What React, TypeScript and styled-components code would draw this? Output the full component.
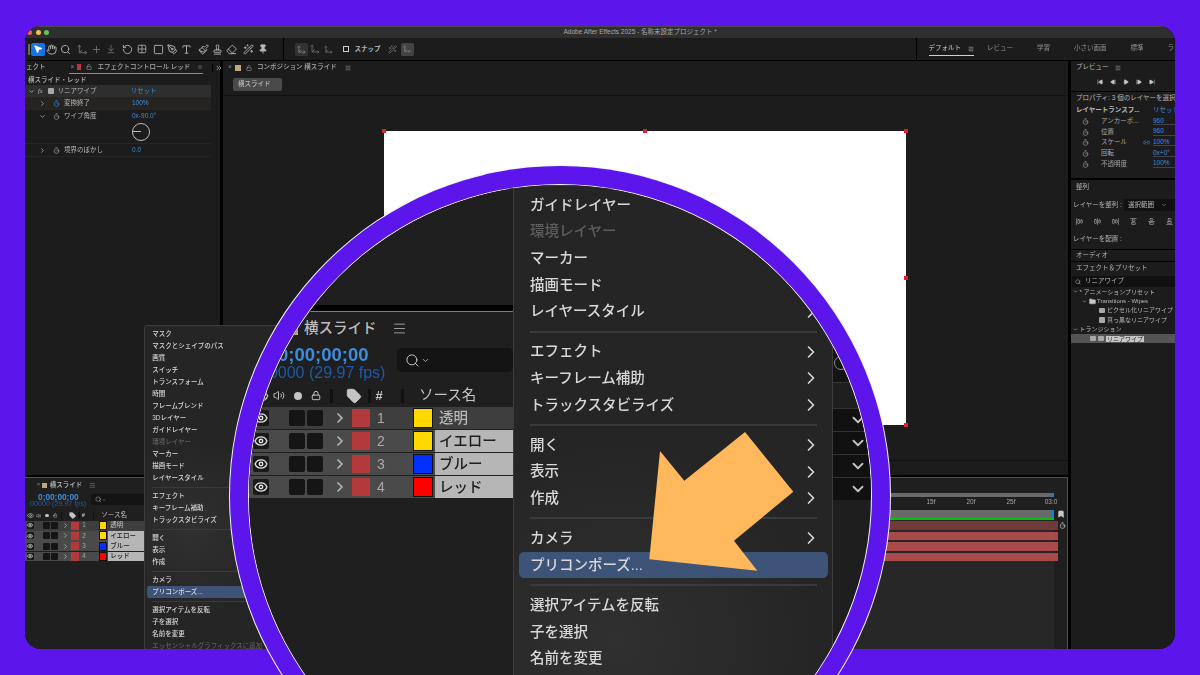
import React from 'react'
import styled, { createGlobalStyle } from 'styled-components'
import {
  AlignHorizontalJustifyCenter,
  AlignHorizontalJustifyEnd,
  AlignHorizontalJustifyStart,
  AlignVerticalJustifyCenter,
  AlignVerticalJustifyEnd,
  AlignVerticalJustifyStart,
  ArrowDownToLine,
  Bookmark,
  ChevronDown,
  ChevronRight,
  ChevronsRight,
  Eraser,
  Eye,
  Folder,
  Grid2x2,
  Hand,
  Link2,
  Lock,
  LockOpen,
  Menu as MenuIcon,
  MousePointer2,
  Move3d,
  Paintbrush,
  PenTool,
  Pin,
  Plus,
  RotateCcw,
  Search,
  SkipBack,
  SkipForward,
  Square,
  Stamp,
  StepBack,
  StepForward,
  Play,
  Tag,
  Timer,
  Type,
  Volume2,
  Wand2,
} from 'lucide-react'

const PURPLE = '#5c16ec'
const FONT = '"Liberation Sans", "Noto Sans CJK JP", sans-serif'
const SMALL = 0.449

const GlobalStyle = createGlobalStyle`
  html, body {
    margin: 0;
    padding: 0;
    background: ${PURPLE};
    overflow: hidden;
  }
  * {
    box-sizing: border-box;
  }
`

type MenuEntry = { label: string; sub?: boolean; off?: boolean; on?: boolean } | 'line'

const tailEntries: MenuEntry[] = [
  { label: 'ガイドレイヤー' },
  { label: '環境レイヤー', off: true },
  { label: 'マーカー' },
  { label: '描画モード', sub: true },
  { label: 'レイヤースタイル', sub: true },
  'line',
  { label: 'エフェクト', sub: true },
  { label: 'キーフレーム補助', sub: true },
  { label: 'トラックスタビライズ', sub: true },
  'line',
  { label: '開く', sub: true },
  { label: '表示', sub: true },
  { label: '作成', sub: true },
  'line',
  { label: 'カメラ', sub: true },
  { label: 'プリコンポーズ...', on: true },
  'line',
  { label: '選択アイテムを反転' },
  { label: '子を選択' },
  { label: '名前を変更' },
]

const headEntries: MenuEntry[] = [
  { label: 'マスク', sub: true },
  { label: 'マスクとシェイプのパス', sub: true },
  { label: '画質', sub: true },
  { label: 'スイッチ', sub: true },
  { label: 'トランスフォーム', sub: true },
  { label: '時間', sub: true },
  { label: 'フレームブレンド', sub: true },
  { label: '3Dレイヤー' },
]

const layers = [
  { num: 1, name: '透明', color: '#ffd800', picked: false },
  { num: 2, name: 'イエロー', color: '#ffd800', picked: true },
  { num: 3, name: 'ブルー', color: '#0030ff', picked: true },
  { num: 4, name: 'レッド', color: '#ff0000', picked: true },
]

const ContextMenu = ({ entries }: { entries: MenuEntry[] }) => (
  <MenuBox>
    {entries.map((entry, i) =>
      entry === 'line' ? (
        <MenuLine key={i} />
      ) : (
        <MenuItem key={entry.label} $off={entry.off} $on={entry.on}>
          {entry.label}
          {entry.sub && <ChevronRight size={20} strokeWidth={2} />}
        </MenuItem>
      ),
    )}
  </MenuBox>
)

const TimelinePanel = () => (
  <PanelColumn>
    <TimelineTab>
      <CloseMark>×</CloseMark>
      <TanChip />
      <TimelineTitle>横スライド</TimelineTitle>
      <MenuIcon size={15} strokeWidth={1.6} color="#9a9a9a" />
    </TimelineTab>
    <TimeRow>
      <TimeBlock>
        <TimeCode>0;00;00;00</TimeCode>
        <FrameCode>00000 (29.97 fps)</FrameCode>
      </TimeBlock>
      <SearchField>
        <Search size={15} strokeWidth={1.6} />
        <ChevronDown size={9} strokeWidth={2} />
      </SearchField>
    </TimeRow>
    <ColumnHeader>
      <HeaderCell $w={24}>
        <Eye size={16} strokeWidth={2} />
      </HeaderCell>
      <HeaderCell $w={12}>
        <Volume2 size={17} strokeWidth={2} />
      </HeaderCell>
      <HeaderCell $w={26}>
        <HeaderDot />
      </HeaderCell>
      <HeaderCell $w={10}>
        <Lock size={15} strokeWidth={2.4} />
      </HeaderCell>
      <HeaderCell $w={20}>
        <HeaderSep />
      </HeaderCell>
      <HeaderCell $w={26}>
        <Tag size={16} fill="#c4c4c4" strokeWidth={1.5} />
      </HeaderCell>
      <HeaderCell $w={4}>
        <HeaderSep />
      </HeaderCell>
      <HeaderCell $w={16}>#</HeaderCell>
      <HeaderCell $w={30}>
        <HeaderSep />
      </HeaderCell>
      <SourceLabel>ソース名</SourceLabel>
    </ColumnHeader>
    {layers.map((layer) => (
      <LayerRow key={layer.num} $first={layer.num === 1}>
        <EyeBox>
          <Eye size={14} strokeWidth={2.4} />
        </EyeBox>
        <SwitchBox />
        <SwitchBox />
        <RowChevron>
          <ChevronRight size={16} strokeWidth={2.6} color="#b5b5b5" />
        </RowChevron>
        <LabelChip />
        <LayerNumber>{layer.num}</LayerNumber>
        <Swatch style={{ background: layer.color }} />
        <LayerName $picked={layer.picked}>{layer.name}</LayerName>
      </LayerRow>
    ))}
  </PanelColumn>
)

const Stopwatch = ({ on }: { on?: boolean }) => (
  <WatchSlot>
    <Timer size={7} strokeWidth={2} color={on ? '#3b8de0' : '#a8a8a8'} />
  </WatchSlot>
)

const propertyRows = [
  { label: 'アンカーポ...', value: '960' },
  { label: '位置', value: '960' },
  { label: 'スケール', value: '100%', link: true },
  { label: '回転', value: '0x+0°' },
  { label: '不透明度', value: '100%' },
]

const App = () => (
  <Page>
    <GlobalStyle />
    <Window>
      <TitleBar>
        <Light $c="#ed5f57" />
        <Light $c="#f4bd4f" />
        <Light $c="#61c454" />
        <WindowTitle>Adobe After Effects 2025 - 名称未設定プロジェクト *</WindowTitle>
      </TitleBar>
      <Toolbar>
        <Grip />
        <ToolGroup>
          <ToolSlot $active>
            <MousePointer2 size={10} fill="#fff" color="#fff" />
          </ToolSlot>
          <ToolSlot><Hand size={11} /></ToolSlot>
          <ToolSlot><Search size={11} /></ToolSlot>
        </ToolGroup>
        <ToolGroup $dim>
          <ToolSlot><Move3d size={11} /></ToolSlot>
          <ToolSlot><Plus size={11} /></ToolSlot>
          <ToolSlot><ArrowDownToLine size={10} /></ToolSlot>
        </ToolGroup>
        <ToolGroup>
          <ToolSlot><RotateCcw size={11} /></ToolSlot>
          <ToolSlot><Grid2x2 size={10} strokeDasharray="2 2" /></ToolSlot>
        </ToolGroup>
        <ToolGroup>
          <ToolSlot><Square size={11} /></ToolSlot>
          <ToolSlot><PenTool size={11} /></ToolSlot>
          <ToolSlot><Type size={11} /></ToolSlot>
        </ToolGroup>
        <ToolGroup>
          <ToolSlot><Paintbrush size={11} /></ToolSlot>
          <ToolSlot><Stamp size={11} /></ToolSlot>
          <ToolSlot><Eraser size={11} /></ToolSlot>
        </ToolGroup>
        <ToolGroup>
          <ToolSlot><Wand2 size={11} /></ToolSlot>
          <ToolSlot><Pin size={10} fill="#bbb" /></ToolSlot>
        </ToolGroup>
        <ToolDivider />
        <AxisBox>
          <Move3d size={9} />
        </AxisBox>
        <ToolSlot $dim><Move3d size={10} /></ToolSlot>
        <ToolSlot $dim><Move3d size={9} /></ToolSlot>
        <SnapCheck />
        <SnapLabel>スナップ</SnapLabel>
        <ToolSlot $dim><Wand2 size={9} /></ToolSlot>
        <SnapButton>
          <Move3d size={8} />
        </SnapButton>
        <WorkspaceTabs>
          <WorkspaceTab $active>
            デフォルト
            <MenuIcon size={6} />
          </WorkspaceTab>
          <WorkspaceTab>レビュー</WorkspaceTab>
          <WorkspaceTab>学習</WorkspaceTab>
          <WorkspaceTab>小さい画面</WorkspaceTab>
          <WorkspaceTab>標準</WorkspaceTab>
          <WorkspaceTab>ラ</WorkspaceTab>
        </WorkspaceTabs>
      </Toolbar>
      <Workspace>
        <MainColumn>
          <TopRow>
            <EffectPanel>
              <PanelTabs>
                <ClippedTab>ェクト</ClippedTab>
                <ActiveTab>
                  <TinyClose>×</TinyClose>
                  <RedChip />
                  <TabLock>
                    <LockOpen size={6} />
                  </TabLock>
                  <TabLabel>エフェクトコントロール レッド</TabLabel>
                  <MenuIcon size={6} />
                </ActiveTab>
                <MoreTabs>
                  <ChevronsRight size={8} strokeWidth={2.4} />
                </MoreTabs>
              </PanelTabs>
              <Crumb>横スライド・レッド</Crumb>
              <EffectList>
                <EffectRow $bg="#2e2e2e" $h={13}>
                  <ChevronDown size={7} strokeWidth={2.5} />
                  <FxMark>fx</FxMark>
                  <PresetGlyph />
                  <EffectName $w={73} $gap={3}>リニアワイプ</EffectName>
                  <EffectValue>リセット</EffectValue>
                </EffectRow>
                <EffectRow $bg="#272320" $h={12} $indent>
                  <ChevronRight size={7} strokeWidth={2.5} />
                  <Stopwatch on />
                  <EffectName $w={68}>変換終了</EffectName>
                  <EffectValue>100%</EffectValue>
                </EffectRow>
                <EffectRow $h={34} $indent $top>
                  <ChevronDown size={7} strokeWidth={2.5} />
                  <Stopwatch />
                  <EffectName $w={68}>ワイプ角度</EffectName>
                  <AngleCell>
                    <EffectValue>0x-90.0°</EffectValue>
                    <AngleDial />
                  </AngleCell>
                </EffectRow>
                <EffectRow $h={13} $indent>
                  <ChevronRight size={7} strokeWidth={2.5} />
                  <Stopwatch />
                  <EffectName $w={68}>境界のぼかし</EffectName>
                  <EffectValue>0.0</EffectValue>
                </EffectRow>
              </EffectList>
            </EffectPanel>
            <CompPanel>
              <PanelTabs>
                <TinyClose>×</TinyClose>
                <TanTabChip />
                <TabLock>
                  <LockOpen size={6} />
                </TabLock>
                <TabLabel>コンポジション 横スライド</TabLabel>
                <MenuIcon size={6} />
              </PanelTabs>
              <CompBreadcrumb>
                <CompButton>横スライド</CompButton>
              </CompBreadcrumb>
              <Viewport>
                <Canvas>
                  <Handle $x={0} $y={0} />
                  <Handle $x={50} $y={0} />
                  <Handle $x={100} $y={0} />
                  <Handle $x={100} $y={50} />
                  <Handle $x={100} $y={100} />
                </Canvas>
              </Viewport>
              <CompFooter />
            </CompPanel>
          </TopRow>
          <Timeline>
            <SmallPanel>
              <TimelinePanel />
            </SmallPanel>
            <Tracks>
              <RangeBar />
              <Ruler>
                {['15f', '20f', '25f', '03:0'].map((t) => (
                  <RulerCell key={t}>{t}</RulerCell>
                ))}
              </Ruler>
              <WorkRow>
                <WorkBar />
                <SideGlyph>
                  <Bookmark size={8} fill="#c8c8c8" color="#c8c8c8" />
                </SideGlyph>
              </WorkRow>
              <GreenLine />
              <BodyRow>
                <TrackBody>
                  <LayerBar $c="#703a3a" />
                  <LayerBar $c="#a84a4a" />
                  <LayerBar $c="#a84a4a" />
                  <LayerBar $c="#a84a4a" />
                </TrackBody>
                <SideGlyph>
                  <KeyGlyph>
                    <Timer size={7} strokeWidth={2.4} color="#c0c0c0" />
                  </KeyGlyph>
                </SideGlyph>
              </BodyRow>
            </Tracks>
          </Timeline>
        </MainColumn>
        <RightColumn>
          <PreviewBox>
            <SideTitle>
              プレビュー
              <MenuIcon size={6} />
            </SideTitle>
            <Transport>
              <SkipBack size={6} fill="#c8c8c8" />
              <StepBack size={6} fill="#c8c8c8" />
              <Play size={6} fill="#c8c8c8" />
              <StepForward size={6} fill="#c8c8c8" />
              <SkipForward size={6} fill="#c8c8c8" />
            </Transport>
          </PreviewBox>
          <PropertyBox>
            <SideLine>プロパティ: 3 個のレイヤーを選択</SideLine>
            <PropertyHead>
              <strong>レイヤートランスフ...</strong>
              <BlueText>リセット</BlueText>
            </PropertyHead>
            {propertyRows.map((row) => (
              <PropertyRow key={row.label}>
                <Timer size={7} strokeWidth={2} color="#a8a8a8" />
                <PropertyLabel>{row.label}</PropertyLabel>
                <LinkSlot>{row.link && <Link2 size={7} color="#3b8de0" />}</LinkSlot>
                <PropertyValue>{row.value}</PropertyValue>
              </PropertyRow>
            ))}
          </PropertyBox>
          <AlignBox>
            <AlignTitle>整列</AlignTitle>
            <AlignSelect>
              レイヤーを整列 :
              <SelectField>
                選択範囲
                <ChevronDown size={6} />
              </SelectField>
            </AlignSelect>
            <AlignIcons>
              <AlignHorizontalJustifyStart size={7} />
              <AlignHorizontalJustifyCenter size={7} />
              <AlignHorizontalJustifyEnd size={7} />
              <AlignVerticalJustifyStart size={7} />
              <AlignVerticalJustifyCenter size={7} />
              <AlignVerticalJustifyEnd size={7} />
            </AlignIcons>
            <SideLine>レイヤーを配置 :</SideLine>
          </AlignBox>
          <AudioRow>オーディオ</AudioRow>
          <PresetBox>
            <PresetTitle>エフェクト＆プリセット</PresetTitle>
            <PresetSearch>
              <Search size={6} />
              リニアワイプ
            </PresetSearch>
            <TreeRow $indent={2}>
              <ChevronDown size={5} strokeWidth={3} />* アニメーションプリセット
            </TreeRow>
            <TreeRow $indent={11}>
              <ChevronDown size={5} strokeWidth={3} />
              <Folder size={7} fill="#c8c8c8" />
              Transitions - Wipes
            </TreeRow>
            <TreeRow $indent={28}>
              <PresetGlyph />
              ピクセル化リニアワイプ
            </TreeRow>
            <TreeRow $indent={28}>
              <PresetGlyph />
              真っ黒なリニアワイプ
            </TreeRow>
            <TreeRow $indent={2}>
              <ChevronDown size={5} strokeWidth={3} />
              トランジション
            </TreeRow>
            <TreeRow $indent={19} $active>
              <PresetGlyph />
              <PresetGlyph />
              <TreePicked>リニアワイプ</TreePicked>
            </TreeRow>
          </PresetBox>
        </RightColumn>
      </Workspace>
      <SmallMenuAnchor>
        <SmallPanel>
          <ContextMenu
            entries={[
              ...headEntries,
              ...tailEntries,
              { label: 'エッセンシャルグラフィックスに追加', off: true },
            ]}
          />
        </SmallPanel>
      </SmallMenuAnchor>
    </Window>

    <Lens>
      <LensTimeline>
        <LensFill $h={120} />
        <LensBand />
        <TimelinePanel />
      </LensTimeline>
      <LensMenu>
        <ContextMenu entries={tailEntries} />
      </LensMenu>
      <LensRest>
        <LensFill $h={165} />
        <LensSearch>
          <LensDial />
        </LensSearch>
        <LensFill $h={25} />
        {layers.map((layer) => (
          <LensMode key={layer.num}>
            <ChevronDown size={18} strokeWidth={2.4} />
          </LensMode>
        ))}
      </LensRest>
    </Lens>

    <ArrowDrawing viewBox="0 0 1200 675">
      <polygon
        points="745,432 793.3,491.7 734,540.7 757.3,570.7 649.3,559.3 660,451 684.3,480.7"
        fill="#ffb85c"
      />
    </ArrowDrawing>
  </Page>
)

export default App

const Page = styled.div`
  position: relative;
  width: 1200px;
  height: 675px;
  padding: 26px 25px;
  overflow: hidden;
  background: ${PURPLE};
  font-family: ${FONT};
`

const Window = styled.div`
  position: relative;
  display: flex;
  flex-direction: column;
  width: 1150px;
  height: 623px;
  overflow: hidden;
  border-radius: 16px;
  background: #000;
  color: #b8b8b8;
  font-size: 6.5px;
  line-height: 1;
  filter: blur(0.4px);
`

const TitleBar = styled.div`
  display: flex;
  align-items: center;
  flex: none;
  gap: 3.5px;
  height: 12px;
  padding-left: 2px;
  background: #2f2f2f;
  border-top: 1px solid #4a4a4a;
`

const Light = styled.span<{ $c: string }>`
  width: 5px;
  height: 5px;
  border-radius: 50%;
  background: ${(p) => p.$c};
`

const WindowTitle = styled.span`
  margin-left: 511px;
  color: #a8a8a8;
  font-size: 6.5px;
`

const Toolbar = styled.div`
  display: flex;
  align-items: center;
  flex: none;
  height: 22px;
  margin-bottom: 1px;
  padding-left: 3px;
  background: #1c1c1c;
  color: #b5b5b5;

  & > * {
    flex-shrink: 0;
  }
`

const Grip = styled.span`
  width: 1.5px;
  height: 11px;
  margin-right: 1px;
  background: #666;
`

const ToolGroup = styled.div<{ $dim?: boolean }>`
  display: flex;
  align-items: center;
  margin-right: 3px;
  opacity: ${(p) => (p.$dim ? 0.55 : 1)};
`

const ToolSlot = styled.span<{ $active?: boolean; $dim?: boolean }>`
  display: flex;
  align-items: center;
  justify-content: center;
  width: 14px;
  height: 13px;
  border-radius: 2px;
  background: ${(p) => (p.$active ? '#1473e6' : 'transparent')};
  opacity: ${(p) => (p.$dim ? 0.55 : 1)};
`

const ToolDivider = styled.span`
  width: 1px;
  height: 22px;
  margin: 0 11px 0 10px;
  background: #000;
`

const AxisBox = styled.span`
  display: flex;
  align-items: center;
  justify-content: center;
  width: 13px;
  height: 13px;
  border-radius: 2px;
  background: #333;
  color: #888;
`

const SnapCheck = styled.span`
  width: 6px;
  height: 6px;
  margin: 0 6px 0 7px;
  border: 1px solid #d0d0d0;
`

const SnapLabel = styled.span`
  margin-right: 5px;
  font-weight: 700;
  white-space: nowrap;
`

const SnapButton = styled(AxisBox)`
  margin-left: 1px;
  background: #444;
`

const WorkspaceTabs = styled.div`
  display: flex;
  align-items: stretch;
  gap: 24px;
  height: 22px;
  margin-left: 502px;
  padding-left: 12px;
  border-left: 1px solid #000;
  white-space: nowrap;
`

const WorkspaceTab = styled.span<{ $active?: boolean }>`
  display: flex;
  align-items: center;
  gap: 7px;
  margin-right: ${(p) => (p.$active ? '-11px' : '0')};
  margin-bottom: 4px;
  margin-top: 4px;
  border-bottom: 1px solid ${(p) => (p.$active ? '#d0d0d0' : 'transparent')};
  color: ${(p) => (p.$active ? '#d0d0d0' : '#8f8f8f')};
`

const Workspace = styled.div`
  display: flex;
  flex: 1;
  gap: 3px;
  min-height: 0;
`

const MainColumn = styled.div`
  display: flex;
  flex-direction: column;
  gap: 2px;
  width: 1043px;
`

const TopRow = styled.div`
  display: flex;
  flex: 1;
  gap: 3px;
  min-height: 0;
`

const EffectPanel = styled.section`
  width: 195px;
  background: #1c1c1c;
`

const PanelTabs = styled.div`
  display: flex;
  align-items: center;
  gap: 3px;
  height: 13px;
  padding-left: 5px;
  color: #a8a8a8;
`

const ClippedTab = styled.span`
  width: 22px;
  margin-left: -4px;
  white-space: nowrap;
  font-weight: 500;
`

const ActiveTab = styled.div`
  display: flex;
  align-items: center;
  gap: 3px;
  width: 134px;
  height: 13px;
  margin-left: 20px;
  padding-left: 2px;
  border-bottom: 1px solid #8a8a8a;
`

const TinyClose = styled.span`
  width: 4px;
  color: #888;
`

const RedChip = styled.span`
  width: 6px;
  height: 6px;
  background: #c0333a;
`

const TanTabChip = styled(RedChip)`
  background: #bfa67c;
`

const TabLock = styled.span`
  display: flex;
  margin: 0 2px 0 2px;
`

const TabLabel = styled.span`
  margin-right: 5px;
  font-weight: 500;
  white-space: nowrap;
`

const MoreTabs = styled.span`
  display: flex;
  margin-left: 6px;
  padding-left: 2px;
  border-left: 1px solid #000;
`

const Crumb = styled.div`
  display: flex;
  align-items: center;
  height: 11px;
  padding: 1px 0 0 3px;
  font-weight: 500;
`

const EffectList = styled.div`
  width: 186px;
`

const EffectRow = styled.div<{ $bg?: string; $h: number; $indent?: boolean; $top?: boolean }>`
  display: flex;
  align-items: ${(p) => (p.$top ? 'flex-start' : 'center')};
  height: ${(p) => p.$h}px;
  padding-top: ${(p) => (p.$top ? '3px' : '0')};
  padding-left: ${(p) => (p.$indent ? '14px' : '3px')};
  background: ${(p) => p.$bg ?? 'transparent'};
  border-bottom: 1px solid #262626;
`

const FxMark = styled.span`
  width: 13px;
  padding-left: 3px;
  font-style: italic;
  font-family: "Liberation Serif", serif;
`

const WatchSlot = styled.span`
  display: flex;
  justify-content: center;
  width: 16px;
  margin-left: 2px;
`

const EffectName = styled.span<{ $w: number; $gap?: number }>`
  width: ${(p) => p.$w}px;
  margin-left: ${(p) => p.$gap ?? 0}px;
  white-space: nowrap;
`

const EffectValue = styled.span`
  color: #3b8de0;
  white-space: nowrap;
`

const AngleCell = styled.div`
  display: flex;
  flex-direction: column;
  gap: 3px;
`

const AngleDial = styled.span`
  position: relative;
  width: 18px;
  height: 18px;
  border: 1px solid #bdbdbd;
  border-radius: 50%;

  &::after {
    content: '';
    position: absolute;
    left: 0;
    top: 7.5px;
    width: 8px;
    height: 1px;
    background: #bdbdbd;
  }
`

const CompPanel = styled.section`
  display: flex;
  flex-direction: column;
  flex: 1;
  background: #1c1c1c;
`

const CompBreadcrumb = styled.div`
  display: flex;
  align-items: flex-start;
  height: 22px;
  padding: 4px 0 0 10px;
  border-bottom: 1px solid #111;
`

const CompButton = styled.span`
  display: flex;
  align-items: center;
  width: 49px;
  height: 13px;
  padding-left: 5px;
  border-radius: 2px;
  background: #4a4a4a;
  font-weight: 500;
`

const Viewport = styled.div`
  display: flex;
  align-items: center;
  justify-content: center;
  flex: 1;
  min-height: 0;
  padding-right: 1px;
`

const Canvas = styled.div`
  position: relative;
  width: 522px;
  height: 294px;
  background: #fff;
`

const Handle = styled.span<{ $x: number; $y: number }>`
  position: absolute;
  left: ${(p) => p.$x}%;
  top: ${(p) => p.$y}%;
  width: 4px;
  height: 4px;
  margin: -2px;
  background: #d5232f;
`

const CompFooter = styled.div`
  flex: none;
  height: 15px;
  border-top: 1px solid #111;
`

const Timeline = styled.section`
  display: flex;
  flex: none;
  height: 172px;
  border-top: 1px solid #2a5a8a;
  border-right: 1px solid #2a5a8a;
  background: #1f1f1f;
`

const SmallPanel = styled.div`
  flex: none;
  width: 445px;
  zoom: ${SMALL};
  height: 100%;
`

const PanelColumn = styled.div`
  display: flex;
  flex-direction: column;
  flex: none;
`

const TimelineTab = styled.div`
  display: flex;
  align-items: center;
  height: 33px;
  padding-left: 26px;
`

const CloseMark = styled.span`
  width: 11px;
  color: #888;
  font-size: 13px;
`

const TanChip = styled.span`
  width: 12px;
  height: 12px;
  margin-right: 6px;
  background: #bfa67c;
`

const TimelineTitle = styled.span`
  margin-right: 15px;
  color: #bdbdbd;
  font-size: 14.5px;
  font-weight: 500;
`

const TimeRow = styled.div`
  display: flex;
  align-items: flex-start;
  height: 39px;
`

const TimeBlock = styled.div`
  display: flex;
  flex-direction: column;
  flex: none;
  width: 148px;
  padding-left: 11px;
  white-space: nowrap;
`

const TimeCode = styled.span`
  margin-left: 18px;
  color: #3b8de0;
  font-size: 18.5px;
  font-weight: 700;
  line-height: 19px;
`

const FrameCode = styled.span`
  color: #1c5aa8;
  font-size: 16px;
  line-height: 17px;
`

const SearchField = styled.div`
  display: flex;
  align-items: center;
  flex: 1;
  gap: 1px;
  height: 24px;
  margin-top: 3px;
  padding-left: 8px;
  border-radius: 5px;
  background: #141414;
  color: #c8c8c8;
`

const ColumnHeader = styled.div`
  display: flex;
  align-items: center;
  height: 23px;
  color: #c4c4c4;
  font-size: 13px;
  font-weight: 700;
`

const HeaderCell = styled.span<{ $w: number }>`
  display: flex;
  align-items: center;
  justify-content: center;
  flex: none;
  width: ${(p) => p.$w}px;
`

const HeaderDot = styled.span`
  width: 8px;
  height: 8px;
  border-radius: 50%;
  background: #c4c4c4;
`

const HeaderSep = styled.span`
  width: 3px;
  height: 14px;
  background: #111;
`

const SourceLabel = styled.span`
  margin-left: 2px;
  font-size: 14.5px;
  font-weight: 400;
  white-space: nowrap;
`

const LayerRow = styled.div<{ $first?: boolean }>`
  display: flex;
  align-items: center;
  height: 22px;
  margin-bottom: 1px;
  padding-left: 4px;
  background: ${(p) => (p.$first ? '#3e3e3e' : '#4a4a4a')};
`

const EyeBox = styled.span`
  display: flex;
  align-items: center;
  justify-content: center;
  width: 16px;
  height: 16px;
  margin-right: 20px;
  border-radius: 2px;
  background: #1a1a1a;
  color: #e0e0e0;
`

const SwitchBox = styled.span`
  width: 16px;
  height: 16px;
  margin-right: 2px;
  border-radius: 2px;
  background: #151515;
`

const RowChevron = styled.span`
  display: flex;
  margin-left: 7px;
`

const LabelChip = styled.span`
  flex: none;
  width: 18px;
  height: 18px;
  margin-left: 4px;
  background: #b23a3a;
`

const LayerNumber = styled.span`
  flex: none;
  width: 43px;
  padding-left: 7px;
  color: #a8a8a8;
  font-size: 14px;
`

const Swatch = styled.span`
  flex: none;
  width: 20px;
  height: 20px;
  border: 1.5px solid #111;
`

const LayerName = styled.span<{ $picked: boolean }>`
  display: flex;
  align-items: center;
  flex: 1;
  align-self: stretch;
  margin-left: 2px;
  padding-left: 4px;
  background: ${(p) => (p.$picked ? '#b6b6b6' : 'transparent')};
  color: ${(p) => (p.$picked ? '#1e1e1e' : '#b8b8b8')};
  font-size: 14.5px;
  font-weight: 500;
  white-space: nowrap;
`

const Tracks = styled.div`
  display: flex;
  flex-direction: column;
  flex: 1;
  min-width: 0;
  padding-top: 15px;
`

const RangeBar = styled.div`
  flex: none;
  height: 4px;
  margin-right: 13px;
  background: #6a6a6a;
  border-right: 2px solid #0a84e0;
`

const Ruler = styled.div`
  display: flex;
  justify-content: flex-end;
  flex: none;
  height: 13px;
  margin-right: -4px;
  padding-top: 2px;
  color: #a8a8a8;
  font-size: 6.5px;
`

const RulerCell = styled.span`
  width: 40px;
  text-align: center;
`

const WorkRow = styled.div`
  display: flex;
  flex: none;
  height: 8px;
`

const WorkBar = styled.div`
  flex: 1;
  background: #6a6a6a;
  border-right: 2px solid #0a84e0;
`

const SideGlyph = styled.span`
  display: flex;
  justify-content: center;
  flex: none;
  width: 13px;
`

const KeyGlyph = styled.span`
  display: flex;
  margin: 2px 0 0 4px;
`

const GreenLine = styled.div`
  flex: none;
  height: 2px;
  margin-right: 13px;
  background: #0dbb16;
`

const BodyRow = styled.div`
  display: flex;
  flex: 1;
  min-height: 0;
`

const TrackBody = styled.div`
  display: flex;
  flex-direction: column;
  flex: 1;
  gap: 2px;
  padding-top: 1px;
  background: #272727;
`

const LayerBar = styled.div<{ $c: string }>`
  height: 8.5px;
  margin-right: -4px;
  background: ${(p) => p.$c};
`

const RightColumn = styled.aside`
  display: flex;
  flex-direction: column;
  flex: 1;
  gap: 1px;
  min-width: 0;
  overflow: hidden;
  white-space: nowrap;
`

const SideBlock = styled.div`
  padding-left: 5px;
  background: #1c1c1c;
`

const PreviewBox = styled(SideBlock)`
  flex: none;
  height: 30px;
  padding-top: 3px;
`

const SideTitle = styled.div`
  display: flex;
  align-items: center;
  gap: 6px;
  height: 7px;
`

const AlignTitle = styled(SideTitle)`
  padding-left: 3px;
`

const PresetTitle = styled(SideTitle)`
  padding-left: 5px;
`

const Transport = styled.div`
  display: flex;
  justify-content: center;
  gap: 7px;
  margin-top: 8px;
  color: #c8c8c8;
`

const PropertyBox = styled(SideBlock)`
  flex: none;
  height: 86px;
  margin-bottom: 1px;
  padding-top: 3px;
`

const SideLine = styled.div`
  height: 8px;
`

const PropertyHead = styled.div`
  display: flex;
  justify-content: space-between;
  width: 120px;
  height: 13px;
  padding-top: 4px;
`

const BlueText = styled.span`
  width: 43px;
  color: #3b8de0;
`

const PropertyRow = styled.div`
  display: flex;
  align-items: center;
  height: 10.7px;
  padding-left: 6px;
  color: #a8a8a8;
`

const PropertyLabel = styled.span`
  width: 31px;
  margin-left: 12px;
`

const LinkSlot = styled.span`
  display: flex;
  width: 21px;
  justify-content: flex-end;
  padding-right: 3px;
`

const PropertyValue = styled.span`
  width: 22px;
  color: #3b8de0;
  border-bottom: 1px solid #444;
`

const AlignBox = styled(SideBlock)`
  flex: none;
  height: 69px;
  padding-top: 4px;
  padding-left: 2px;
`

const AlignSelect = styled.div`
  display: flex;
  align-items: center;
  gap: 2px;
  height: 12px;
  margin-top: 8px;
`

const SelectField = styled.span`
  display: flex;
  align-items: center;
  justify-content: space-between;
  width: 60px;
  height: 12px;
  padding: 0 8px 0 4px;
  background: #111;
`

const AlignIcons = styled.div`
  display: flex;
  gap: 11px;
  margin: 7px 0 11px 3px;
`

const AudioRow = styled(SideBlock)`
  display: flex;
  align-items: center;
  flex: none;
  height: 11px;
`

const PresetBox = styled(SideBlock)`
  flex: 1;
  padding: 3px 0 0 0;
`

const PresetSearch = styled.div`
  display: flex;
  align-items: center;
  gap: 4px;
  height: 11px;
  margin: 4px 0 0 1px;
  padding-left: 3px;
  background: #111;
  font-size: 6.5px;
`

const TreeRow = styled.div<{ $indent: number; $active?: boolean }>`
  display: flex;
  align-items: center;
  gap: 1.5px;
  height: 9.4px;
  padding-left: ${(p) => p.$indent}px;
  background: ${(p) => (p.$active ? '#555' : 'transparent')};
  font-size: 6px;
`

const PresetGlyph = styled.span`
  flex: none;
  width: 5.5px;
  height: 5.5px;
  margin-right: 1px;
  border-radius: 1px;
  background: #a8a8a8;
`

const TreePicked = styled.span`
  padding: 0 1px;
  background: #c8c8c8;
  color: #222;
`

const SmallMenuAnchor = styled.div`
  position: absolute;
  left: 119px;
  top: 299px;
  width: 144px;
  height: 330px;
`

const MenuBox = styled.div`
  width: 320px;
  height: 100%;
  min-height: 760px;
  padding-top: 5.6px;
  border: 1px solid #3c3c3c;
  border-radius: 6px 0 0 0;
  background: radial-gradient(circle at 32% 60%, #303030 0, #252525 40%);
`

const MenuItem = styled.div<{ $off?: boolean; $on?: boolean }>`
  display: flex;
  align-items: center;
  justify-content: space-between;
  height: 26.7px;
  margin: 0 4px 0 5px;
  padding: 0 7px 0 11px;
  border-radius: 5px;
  background: ${(p) => (p.$on ? '#3d5478' : 'transparent')};
  color: ${(p) => (p.$off ? '#5e5e5e' : '#d8d8d8')};
  font-size: 14.5px;
  font-weight: 500;
  white-space: nowrap;
`

const MenuLine = styled.div`
  height: 2px;
  margin: 5.5px 15px 5.8px 16px;
  background: #3a3a3a;
`

const Lens = styled.div`
  position: absolute;
  left: 249px;
  top: 185px;
  display: flex;
  width: 622px;
  height: 622px;
  overflow: hidden;
  border-radius: 50%;
  background: #1e1e1e;
  font-family: ${FONT};
  line-height: 1;
  box-shadow: 0 0 0 1px #f2f2f2, 0 0 0 19px ${PURPLE}, 0 0 0 20px #f2f2f2;
  filter: blur(0.25px);
`

const LensTimeline = styled.div`
  display: flex;
  flex-direction: column;
  flex: none;
  width: 264px;
  background: #1f1f1f;
`

const LensFill = styled.div<{ $h: number }>`
  flex: none;
  height: ${(p) => p.$h}px;
  background: #1f1f1f;
`

const LensBand = styled.div`
  flex: none;
  height: 7px;
  background: #000;
  border-bottom: 1px solid #3b8de0;
`

const LensMenu = styled.div`
  flex: none;
  width: 320px;
`

const LensRest = styled.div`
  display: flex;
  flex-direction: column;
  flex: 1;
  min-width: 0;
`

const LensSearch = styled.div`
  flex: none;
  height: 33px;
  padding: 6px 0 0 1px;
  background: #141414;
  border-bottom: 1px solid #333;
`

const LensDial = styled.span`
  display: block;
  width: 14px;
  height: 14px;
  border: 1.5px solid #888;
  border-radius: 50%;
`

const LensMode = styled.div`
  display: flex;
  align-items: center;
  flex: none;
  height: 23px;
  padding-left: 16px;
  background: #111;
  border-top: 1.5px solid #333;
  color: #c4c4c4;
`

const ArrowDrawing = styled.svg`
  position: absolute;
  inset: 0;
  width: 1200px;
  height: 675px;
  pointer-events: none;
`
